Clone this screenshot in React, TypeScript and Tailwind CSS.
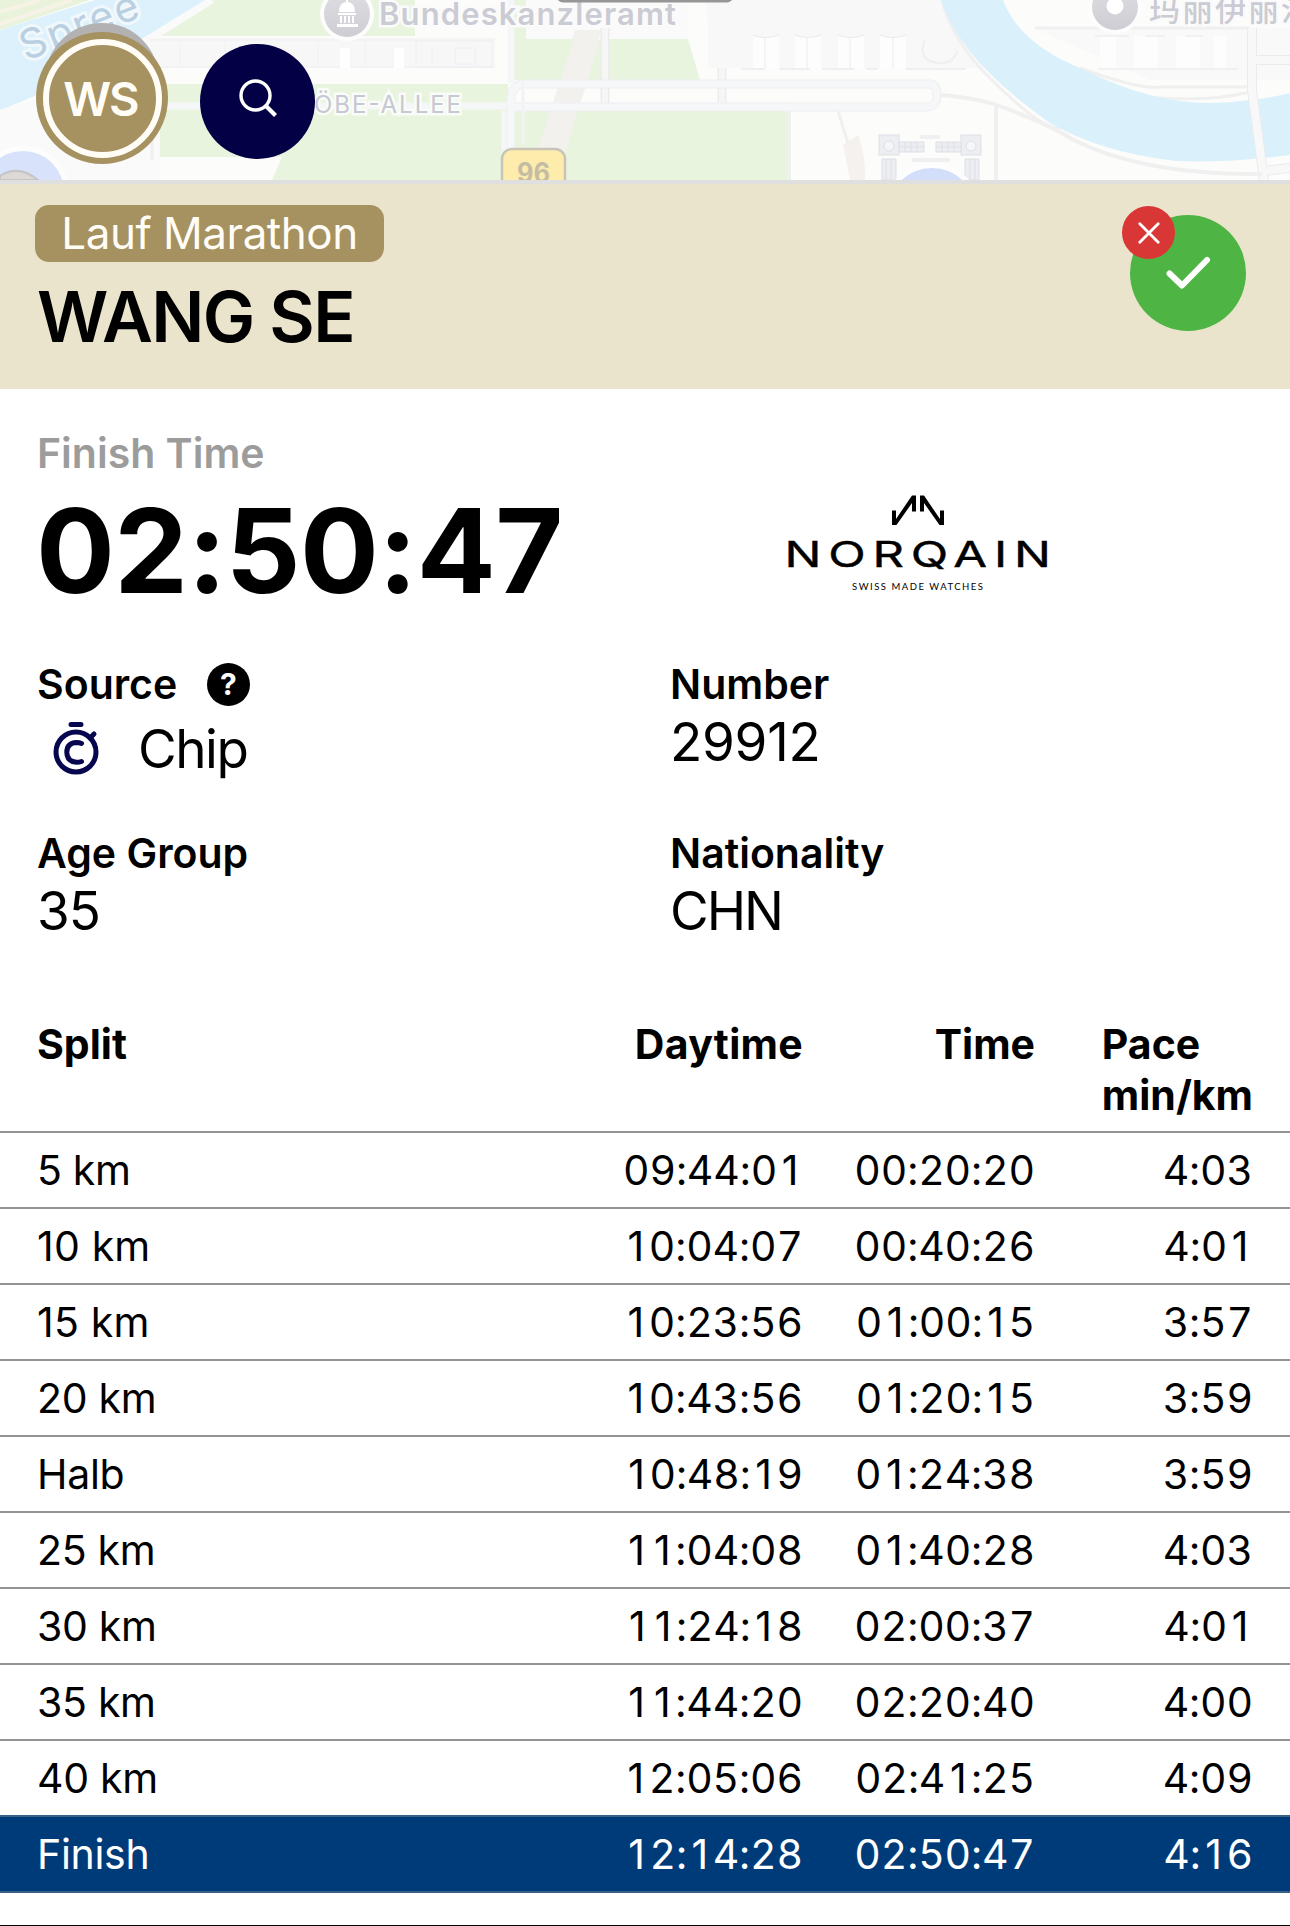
import React from "react";

type Split = { split: string; daytime: string; time: string; pace: string };

const splits: Split[] = [
  { split: "5 km", daytime: "09:44:01", time: "00:20:20", pace: "4:03" },
  { split: "10 km", daytime: "10:04:07", time: "00:40:26", pace: "4:01" },
  { split: "15 km", daytime: "10:23:56", time: "01:00:15", pace: "3:57" },
  { split: "20 km", daytime: "10:43:56", time: "01:20:15", pace: "3:59" },
  { split: "Halb", daytime: "10:48:19", time: "01:24:38", pace: "3:59" },
  { split: "25 km", daytime: "11:04:08", time: "01:40:28", pace: "4:03" },
  { split: "30 km", daytime: "11:24:18", time: "02:00:37", pace: "4:01" },
  { split: "35 km", daytime: "11:44:20", time: "02:20:40", pace: "4:00" },
  { split: "40 km", daytime: "12:05:06", time: "02:41:25", pace: "4:09" },
  { split: "Finish", daytime: "12:14:28", time: "02:50:47", pace: "4:16" },
];

function MapArt() {
  return (
    <svg viewBox="0 0 1290 180" className="block h-[180px] w-full" fontFamily="Inter, 'Noto Sans CJK SC', sans-serif">
      <defs>
        <linearGradient id="pin" x1="0" y1="0" x2="0" y2="1">
          <stop offset="0" stopColor="#dedee2" />
          <stop offset="1" stopColor="#cdcdd3" />
        </linearGradient>
      </defs>
      <rect width="1290" height="180" fill="#fcfcfb" />
      {/* left side: park, river and streets */}
      <path d="M0 0H90L0 30Z" fill="#e9f3dc" />
      <path d="M0 12L40 0M0 24L72 0" stroke="#f6f3e6" strokeWidth="4" />
      <path d="M0 30L95 0H205L140 40Q80 80 0 110Z" fill="#dcf1fb" />
      <path d="M212 0H415V36H150Z" fill="#e8f4dd" />
      <path d="M212 0L140 45" stroke="#fafafa" strokeWidth="7" />
      <rect x="150" y="38" width="345" height="30" fill="#f7f7f8" />
      <path d="M150 40H495M150 67H495" stroke="#efeff1" />
      <path d="M180 42v24M225 42v24M270 42v24M318 42v24M365 42v24" stroke="#f0f0f2" />
      <rect x="340" y="48" width="10" height="20" fill="#fefefe" />
      <rect x="394" y="48" width="10" height="20" fill="#fefefe" />
      <path d="M416 41h76v26h-76zM432 48v16M455 48h20v16h-20z" fill="none" stroke="#eeeef0" />
      <path d="M160 84H508V180H272L282 157H160Z" fill="#e8f4dd" />
      <path d="M0 110L100 78H160V180H0Z" fill="#fafafb" />
      <path d="M152 122V160" stroke="#efeff1" strokeWidth="3" />
      {/* centre block */}
      <path d="M512 0H526V39H688L700 80H512Z" fill="#e8f4dd" />
      <rect x="512" y="111" width="279" height="69" fill="#e8f4dd" />
      <path d="M577 30H603L563 160H534Z" fill="#f3f1ee" />
      <rect x="526" y="0" width="162" height="39" fill="#fafafa" />
      <path d="M575 30H602L598 39H572Z" fill="#f3f1ee" />
      <path d="M705 0H945Q955 35 985 68H708V30Z" fill="#f8f8f9" />
      <path d="M160 106H790M511 0V83M505 111V180" stroke="#f5f6f7" strokeWidth="7" />
      <path d="M605 28V105M722 68V105" stroke="#ececef" strokeWidth="9" />
      <path d="M605 28V105M722 68V105" stroke="#f6f6f7" strokeWidth="6" />
      <path d="M511 180V100Q511 84 526 84H930Q937 84 937 96Q937 107 925 107H511" fill="none" stroke="#eeeef1" strokeWidth="9" />
      <path d="M511 180V100Q511 84 526 84H930Q937 84 937 96Q937 107 925 107H511" fill="none" stroke="#f6f7f8" strokeWidth="7" />
      <path d="M523 80V145" stroke="#f2f3f4" strokeWidth="3" />
      <path d="M789 111V180M838 111L850 150" stroke="#f0f0f2" strokeWidth="3" />
      <path d="M843 145L858 135Q866 155 865 180H850Z" fill="#f5f1ef" />
      {/* rows of government buildings */}
      <g fill="#fdfdfd" stroke="#ececf0">
        <path d="M753 36q12 4 26 0v32h-26zM795 36q12 4 26 0v32h-26zM838 36q12 4 26 0v32h-26zM880 36q12 4 26 0v32h-26z" stroke="none" />
        <path d="M753 35q12 5 26 0M795 35q12 5 26 0M838 35q12 5 26 0M880 35q12 5 26 0M765 38v30M807 38v30M850 38v30M893 38v30" fill="none" />
        <path d="M741 69h24M780 69h30M822 69h32M866 69h12M906 69h60" fill="none" stroke="#e2e2e8" />
      </g>
      <path d="M925 40q-8 20 12 23q16 2 20-12" fill="none" stroke="#efeff1" strokeWidth="2" />
      {/* river bend */}
      <path d="M1034 28H1290V80H1150Z" fill="#f9f9fa" />
      <path d="M942 0Q950 34 980 68Q1040 130 1060 128" fill="none" stroke="#f1efef" strokeWidth="3" />
      <path d="M1035 28H1250M1080 68Q1140 90 1160 87H1250M1130 95Q1200 104 1250 92" fill="none" stroke="#f1f0f0" strokeWidth="3" />
      <path d="M941 0H1003Q1020 45 1085 70Q1150 103 1210 103Q1260 101 1290 93V155Q1230 163 1175 161Q1100 152 1050 123Q960 60 941 0Z" fill="#daf1fb" />
      <g fill="#fdfdfd">
        <rect x="1100" y="36" width="16" height="32" />
        <rect x="1134" y="36" width="24" height="32" />
        <rect x="1176" y="36" width="24" height="32" />
        <rect x="1214" y="36" width="12" height="32" />
      </g>
      <path d="M1095 36h34M1145 36h20M1185 36h18M1098 69h140" stroke="#e8e8ec" />
      <path d="M1252 28V90L1264 180M1256 60H1290M1264 171L1290 168" fill="none" stroke="#ebebee" strokeWidth="10" />
      <path d="M1252 28V90L1264 180M1256 60H1290M1264 171L1290 168" fill="none" stroke="#f8f8f9" strokeWidth="8" />
      <path d="M940 95Q980 98 1005 108Q1050 125 1070 138Q1140 175 1262 174M996 106V180" fill="none" stroke="#f1f0f0" strokeWidth="4" />
      {/* parliament building */}
      <g fill="#eceef2" stroke="#dddfe5">
        <rect x="879" y="135" width="20" height="20" />
        <rect x="961" y="135" width="20" height="20" />
        <path d="M899 142h25v10h-25zM936 142h25v10h-25zM882 159h14v21h-14zM965 159h14v21h-14z" />
        <path d="M899 147h25M936 147h25M905 142v10M911 142v10M917 142v10M942 142v10M948 142v10M954 142v10M886 159v21M891 159v21M970 159v21M975 159v21" />
        <circle cx="889" cy="146" r="5" fill="#f6f6f8" />
        <circle cx="971" cy="146" r="5" fill="#f6f6f8" />
      </g>
      <path d="M912 160h38M920 137h20" stroke="#f0eff1" strokeWidth="4" />
      <circle cx="932" cy="212" r="49" fill="#fdfdfd" />
      <circle cx="932" cy="212" r="44" fill="#d3dffa" />
      {/* landmark on the lower left */}
      <circle cx="23" cy="192" r="46" fill="#fdfdfd" />
      <circle cx="23" cy="192" r="41" fill="#d8e3fb" />
      <path d="M0 176Q18 164 38 180H0Z" fill="#ddd9d7" stroke="#c5c4c6" strokeWidth="2" />
      {/* labels */}
      <text transform="translate(26 61) rotate(-21)" fontSize="41" letterSpacing="2.500" fill="#b9cfe2" stroke="#f1f8fc" strokeWidth="6" paintOrder="stroke">Spree</text>
      <circle cx="347" cy="14" r="27" fill="#fdfdfd" />
      <circle cx="347" cy="14" r="23" fill="url(#pin)" />
      <path d="M339 12q0-9 7-10V-1h2V2q7 1 7 10zM338 13h18v2H338zM340 16h2v7h-2zM344 16h2v7h-2zM348 16h2v7h-2zM352 16h2v7h-2zM337 24h21v3H337z" fill="#fff" />
      <text x="379" y="25" fontSize="31" fontWeight="600" textLength="297" fill="#cbcbd3" stroke="#fbfbfb" strokeWidth="5" paintOrder="stroke">Bundeskanzleramt</text>
      <text x="314" y="113" fontSize="24" textLength="147" fill="#c6c8d4" stroke="#fafcf8" strokeWidth="5" paintOrder="stroke">ÖBE-ALLEE</text>
      <rect x="502" y="149" width="63" height="50" rx="10" fill="#fdecab" stroke="#c9c4b8" strokeWidth="2.5" />
      <text x="533.500" y="183" fontSize="28" fontWeight="700" textLength="33" lengthAdjust="spacingAndGlyphs" textAnchor="middle" fill="#c4bda4">96</text>
      <circle cx="1115" cy="7" r="27" fill="#fdfdfd" />
      <circle cx="1115" cy="7" r="23" fill="url(#pin)" />
      <circle cx="1115" cy="6" r="8.500" fill="#fff" />
      <text x="1149" y="21" fontSize="31" fontWeight="500" letterSpacing="2" fill="#cbcbd3" stroke="#fbfbfb" strokeWidth="4" paintOrder="stroke">玛丽伊丽沙</text>
      {/* sheet grabber */}
      <rect x="557" y="-10" width="176" height="12.500" rx="6" fill="#969696" />
    </svg>
  );
}

function Field({ label, value, spacing }: { label: string; value: string; spacing?: string }) {
  return (
    <div>
      <div className="h-[50px] text-[41px] font-semibold leading-[50px]">{label}</div>
      <div className={"mt-0.5 h-[62px] text-[53px] leading-[62px] " + (spacing ?? "")}>{value}</div>
    </div>
  );
}

// Tabular digits, with a plain-stemmed "1" padded to the same advance.
function Digits({ value }: { value: string }) {
  return (
    <span className="whitespace-nowrap text-right tabular-nums tracking-[-0.1px]">
      {value.split(/(1)/).map((part, i) =>
        part === "1" ? (
          <span key={i} className="px-[4.6px] normal-nums">
            1
          </span>
        ) : (
          part
        ),
      )}
    </span>
  );
}

const columns = "grid grid-cols-[1fr_240px_232px_218px] pl-[37px] pr-[37px]";

export default function App() {
  return (
    <main className="flex h-[1926px] w-[1290px] flex-col overflow-hidden border-b border-black bg-white font-[Inter,'Noto_Sans_CJK_SC',sans-serif] text-black">
      <div className="relative h-[184px] shrink-0 overflow-hidden border-b-4 border-[#dfdfdf]">
        <MapArt />
        <div className="absolute left-[45px] top-[23px] size-[114px] rounded-full bg-[#b3b1b1]" />
        <div className="absolute left-[36px] top-[32px] flex size-[132px] items-center justify-center rounded-full bg-[#a69160]">
          <div className="flex size-[119px] items-center justify-center rounded-full border-[6px] border-[#fffdf6] pr-[3px] text-[47px] font-semibold leading-none tracking-[-2px] text-[#fffdf6]">
            WS
          </div>
        </div>
        <div className="absolute left-[200px] top-[44px] flex size-[115px] items-center justify-center rounded-full bg-[#040046]">
          <svg viewBox="0 0 38 38" className="mb-[7px] size-[38px]" fill="none" stroke="#fff" strokeWidth="3.400">
            <circle cx="16.500" cy="16.500" r="14.500" />
            <path d="M26.500 26.500L36.500 36.500" strokeWidth="4.200" />
          </svg>
        </div>
      </div>

      <header className="flex h-[205px] shrink-0 justify-between bg-[#eae4cd] pl-[35px] pr-[44px]">
        <div className="pt-[21px]">
          <div className="flex h-[57px] w-[349px] items-center justify-center rounded-[14px] bg-[#a69160] text-[44px] leading-[59px] tracking-[-0.5px] text-[#fffdf6]">
            Lauf Marathon
          </div>
          <h1 className="mt-[13px] pl-[2px] text-[70px] font-semibold leading-[84px] tracking-[-1.7px]">WANG SE</h1>
        </div>
        <div className="relative mt-[31px] flex size-[116px] items-center justify-center rounded-full bg-[#4eb545]">
          <svg viewBox="0 0 46 34" className="h-[34px] w-[46px]" fill="none" stroke="#fff" strokeWidth="6" strokeLinecap="round" strokeLinejoin="round">
            <path d="M4.500 17.500L17 29.500L42 4" />
          </svg>
          <div className="absolute -left-[8px] -top-[9px] flex size-[53px] items-center justify-center rounded-full bg-[#d93636]">
            <svg viewBox="0 0 22 22" className="size-[22px]" fill="none" stroke="#fff" strokeWidth="2.800" strokeLinecap="round">
              <path d="M1.800 1.800L20.200 20.200M20.200 1.800L1.800 20.200" />
            </svg>
          </div>
        </div>
      </header>

      <section className="grid h-[270px] shrink-0 grid-cols-[1fr_658px] pl-[37px] pt-[39px]">
        <div>
          <div className="text-[41px] font-semibold leading-[50px] text-[#9c9c9c]">Finish Time</div>
          <div className="-ml-px mt-[13px] whitespace-nowrap text-[117px] font-bold leading-[120px] tracking-[-0.6px]">02:50:47</div>
        </div>
        <div className="pl-[156px] pt-[67px]">
          <svg viewBox="0 0 262 98" className="h-[98px] w-[262px] overflow-visible" fontFamily="Inter, sans-serif">
            <path d="M104 15.500H108V24L124 .5H128V16.500H124V8L108.500 30H104Z" />
            <path d="M156 15.500H152V24L136 .5H132V16.500H136V8L151.500 30H156Z" />
            <text transform="translate(-3.500 71.500) scale(1.380 1)" fontSize="35.500" fontWeight="400" stroke="#000" strokeWidth="0.400" textLength="193" fill="#000">NORQAIN</text>
            <text x="64" y="95" fontFamily="Lato, sans-serif" fontSize="9.500" textLength="131" fill="#000">SWISS MADE WATCHES</text>
          </svg>
        </div>
      </section>

      <section className="grid shrink-0 grid-cols-[1fr_620px] gap-y-[55px] pl-[37px]">
        <div className="h-[114px]">
          <div className="flex h-[50px] items-center">
            <span className="w-[170px] text-[41px] font-semibold leading-[50px]">Source</span>
            <span className="flex size-[43px] items-center justify-center rounded-full bg-black text-[30px] font-bold leading-none text-white">?</span>
          </div>
          <div className="mt-[9px] flex h-[62px]">
            <svg viewBox="0 0 48 56" className="ml-[15px] mt-[2px] h-[56px] w-[48px]" fill="none" stroke="#07074f" strokeWidth="5" strokeLinecap="round">
              <circle cx="24" cy="32" r="20" />
              <path d="M19 4.500H29M38 18L42 14" />
              <path d="M29.500 23.500Q27.500 22.500 24.500 22.500Q14.800 23 14.800 32.300Q14.800 41.500 24.500 42.300Q27.500 42.300 29.500 41.500" />
            </svg>
            <span className="ml-[38px] text-[53px] leading-[62px] tracking-[-1.5px]">Chip</span>
          </div>
        </div>
        <Field label="Number" value="29912" spacing="tracking-[-0.3px]" />
        <Field label="Age Group" value="35" spacing="tracking-[-1px]" />
        <Field label="Nationality" value="CHN" spacing="tracking-[-2px]" />
      </section>

      <section className="mt-[77px] shrink-0 text-[41px]">
        <div className={columns + " h-[114px] border-b-2 border-[#949494] font-bold leading-[51px]"}>
          <span>Split</span>
          <span className="text-right tracking-[0.3px]">Daytime</span>
          <span className="text-right">Time</span>
          <span className="justify-self-end whitespace-nowrap">
            Pace
            <br />
            min/km
          </span>
        </div>
        {splits.map((row, i) => (
          <div
            key={row.split}
            className={
              columns +
              " h-[76px] border-b-2 leading-[75px] " +
              (i === splits.length - 1 ? "border-[#3a6186] bg-[#003b79] text-white" : i === splits.length - 2 ? "border-[#3a6186]" : "border-[#949494]")
            }
          >
            <span className={row.split.startsWith("1") ? "tracking-[0.2px]" : "tracking-[-0.3px]"}>{row.split}</span>
            <Digits value={row.daytime} />
            <Digits value={row.time} />
            <Digits value={row.pace} />
          </div>
        ))}
      </section>
    </main>
  );
}
